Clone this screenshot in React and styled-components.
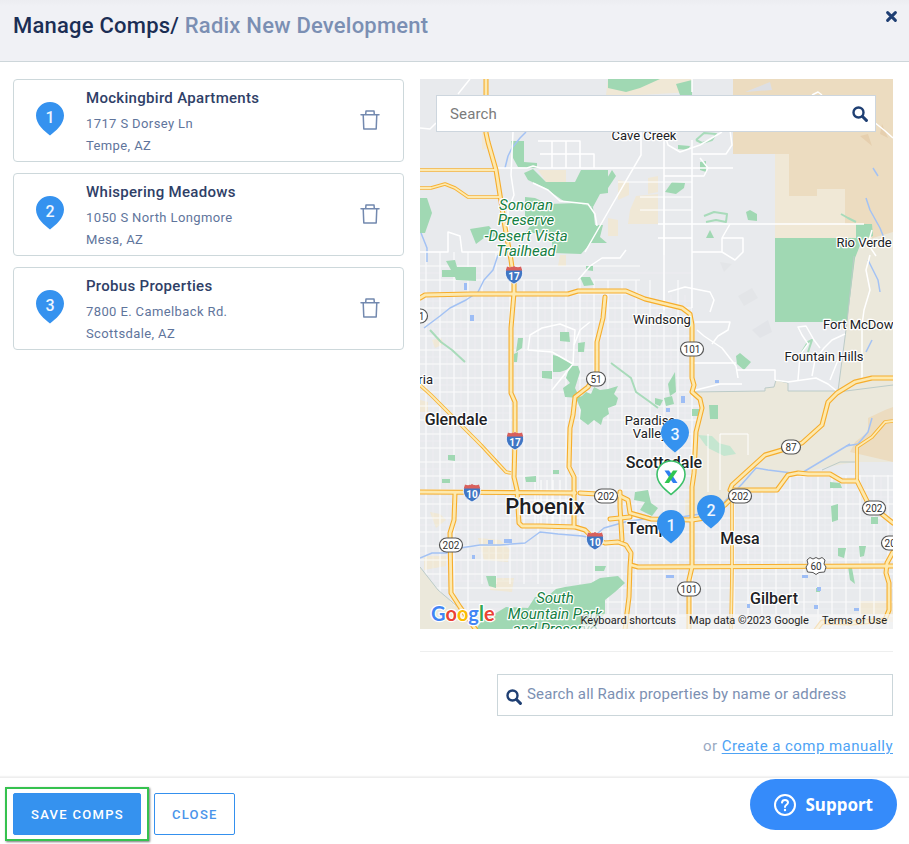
import React from "react";
import styled, { createGlobalStyle } from "styled-components";

const GlobalStyle = createGlobalStyle`
  *, *::before, *::after { box-sizing: border-box; }
  body {
    margin: 0;
    background: #fff;
    color: #14284f;
    font-family: Roboto, "Liberation Sans", sans-serif;
  }
  button, input { font: inherit; }
`;

const Page = styled.div`
  display: flex;
  flex-direction: column;
  min-height: 100vh;
`;

const Header = styled.header`
  display: flex;
  align-items: flex-start;
  justify-content: space-between;
  padding: 10px 11px 19px 13px;
  background: linear-gradient(#ecedf1, #f0f1f5 6px);
  border-bottom: 1px solid #cdd6da;
`;

const Title = styled.h1`
  margin: 0;
  font-size: 22px;
  line-height: 32px;
  font-weight: 500;
  letter-spacing: 0.01em;
  color: #1b2e54;
`;

const Muted = styled.span`
  color: #7b8fb3;
`;

const IconButton = styled.button`
  display: flex;
  padding: 0;
  border: 0;
  background: none;
  color: ${(p) => p.$color};
  cursor: pointer;
`;

const Body = styled.main`
  display: grid;
  grid-template-columns: minmax(0, 391fr) minmax(0, 473fr);
  gap: 16px;
  padding: 17px 16px 21px 13px;
`;

const CompList = styled.ul`
  display: flex;
  flex-direction: column;
  gap: 11px;
  margin: 0;
  padding: 0;
  list-style: none;
`;

const CompCard = styled.li`
  display: flex;
  align-items: center;
  gap: 22px;
  padding: 0 23px 3px 22px;
  border: 1px solid #cdd8db;
  border-radius: 4px;
`;

const CompText = styled.div`
  flex: 1;
  min-width: 0;
  padding: 6px 0 1px;
`;

const CompName = styled.h2`
  margin: 0 0 3px;
  font-size: 15px;
  line-height: 24px;
  font-weight: 500;
  letter-spacing: 0.02em;
  color: #2f4067;
`;

const CompLine = styled.p`
  margin: 0;
  font-size: 13px;
  line-height: 22px;
  letter-spacing: 0.03em;
  color: #5f759c;
`;

const MapColumn = styled.section`
  display: flex;
  flex-direction: column;
`;

const MapFrame = styled.div`
  position: relative;
  height: 550px;
  overflow: hidden;
  background: #e8eaed;
`;

const MapDrawing = styled.svg`
  display: block;
  width: 100%;
  height: 100%;
`;

const MapSearch = styled.label`
  position: absolute;
  top: 16px;
  left: 16px;
  right: 17px;
  display: flex;
  align-items: center;
  height: 37px;
  padding: 0 7px 0 13px;
  border: 1px solid #cdd6de;
  background: #fff;
  color: #1f3f73;
`;

const TextInput = styled.input`
  flex: 1;
  min-width: 0;
  padding: 0;
  border: 0;
  outline: 0;
  background: transparent;
  color: #14284f;
  font-size: 15px;
  line-height: 20px;
  letter-spacing: 0.01em;
  &::placeholder {
    color: ${(p) => p.$hint};
    opacity: 1;
  }
`;

const Attribution = styled.div`
  position: absolute;
  right: 0;
  bottom: 0;
  display: flex;
  gap: 13px;
  padding: 0 6px 2px 0;
  background: rgba(245, 245, 245, 0.7);
  font-size: 11px;
  line-height: 13px;
  color: #222;
  a, button {
    padding: 0;
    border: 0;
    background: none;
    color: inherit;
    text-decoration: none;
    white-space: nowrap;
  }
`;

const Divider = styled.hr`
  width: 100%;
  height: 1px;
  margin: 22px 0;
  border: 0;
  background: #eeefef;
`;

const PropertySearch = styled.label`
  display: flex;
  align-items: flex-start;
  align-self: flex-end;
  gap: 5px;
  width: 396px;
  max-width: 100%;
  height: 42px;
  padding: 9px 8px;
  border: 1px solid #cbd6da;
  color: #1f3f73;
  svg { margin-top: 5px; }
`;

const ManualLine = styled.p`
  margin: 20px 0 0;
  text-align: right;
  font-size: 15px;
  line-height: 20px;
  letter-spacing: 0.03em;
  color: #9aa9c2;
  a {
    color: #4ea3f5;
    text-underline-offset: 2px;
  }
`;

const Footer = styled.footer`
  display: flex;
  align-items: flex-start;
  flex: 1;
  gap: 5px;
  padding: 9px 5px 0;
  border-top: 1px solid #eee;
  box-shadow: 0 -1px 1px #f4f4f4;
`;

const Highlight = styled.div`
  padding: 4px 6px;
  border: 2px solid #35c24f;
  box-shadow: 1px 1px 2px #777;
`;

const ActionButton = styled.button`
  display: block;
  height: 42px;
  padding: 0 16px 0 17px;
  border: 1px solid #3490ee;
  border-radius: 2px;
  background: ${(p) => (p.$primary ? "#3592ef" : "#fff")};
  color: ${(p) => (p.$primary ? "#fff" : "#4a94ea")};
  font-size: 13px;
  font-weight: 500;
  letter-spacing: 0.1em;
  text-transform: uppercase;
  cursor: pointer;
`;

const CloseSlot = styled.div`
  padding-top: 6px;
`;

const SupportButton = styled.button`
  position: fixed;
  right: 12px;
  bottom: 14px;
  display: flex;
  align-items: center;
  gap: 9px;
  height: 51px;
  padding: 0 24px;
  border: 0;
  border-radius: 26px;
  background: #358bfa;
  color: #fff;
  font-family: "Noto Sans", "Open Sans", sans-serif;
  font-size: 17px;
  font-weight: 700;
  cursor: pointer;
`;

/* ---------- icons ---------- */

const SearchIcon = () => (
  <svg width="16" height="16" viewBox="0 0 16 16" fill="none" stroke="currentColor" aria-hidden="true">
    <circle cx="6.5" cy="6.5" r="5" strokeWidth="2.4" />
    <path d="M10.5 10.5L14.4 14.4" strokeWidth="3" strokeLinecap="round" />
  </svg>
);

const CloseIcon = () => (
  <svg width="13" height="13" viewBox="0 0 13 13" fill="none" stroke="currentColor" aria-hidden="true">
    <path d="M2.6 2.6l7.8 7.8M10.4 2.6l-7.8 7.8" strokeWidth="3" strokeLinecap="round" />
  </svg>
);

const TrashIcon = () => (
  <svg width="20" height="22" viewBox="0 -2 20 22" fill="none" stroke="currentColor" strokeWidth="1.5" aria-hidden="true">
    <path d="M1 4.7h18M5.7 4.5L6 .9h8l.3 3.6M3.2 4.8l.6 14.2h12.4l.6-14.2" strokeLinejoin="round" strokeLinecap="round" />
  </svg>
);

const HelpIcon = () => (
  <svg width="22" height="22" viewBox="0 0 22 22" fill="none" stroke="currentColor" strokeWidth="2" aria-hidden="true">
    <circle cx="11" cy="11" r="10" />
    <path d="M8 8.6C8.2 6.8 9.4 6 11 6c1.700 0 3 1 3 2.500 0 2.300-3 2.300-3 4.600" strokeLinecap="round" />
    <circle cx="11" cy="16" r=".6" strokeWidth="1.200" fill="currentColor" />
  </svg>
);

const PIN = "M14 0C6.200 0 0 6 0 13.400 0 22.500 8.600 29 14 33.500 19.400 29 28 22.500 28 13.400 28 6 21.800 0 14 0z";

const PinShape = ({ label }) => (
  <>
    <path d={PIN} fill="#3592ef" />
    <text x="14" y="21" textAnchor="middle" fontSize="16" fontWeight="500" fill="#eef6ff">
      {label}
    </text>
  </>
);

const ListPin = ({ label }) => (
  <svg width="28" height="34" viewBox="0 0 28 34">
    <PinShape label={label} />
  </svg>
);

/* ---------- map data (canvas starts at 420, 79) ---------- */

const LAND = [
  ["#f0e8d6", "775,154 789,154 789,196 817,196 817,189 845,189 845,224 872,224 872,240 775,240"],
  ["#ecdcc0", "733,79 893,79 893,236 872,240 872,224 845,224 845,189 817,189 817,196 789,196 789,154 733,154"],
  ["#f0e8d6", "608,79 676,79 692,79 692,92 640,95 606,95"],
  ["#ebe8db", "866,240 893,232 893,386 838,392 847,322 854,256"],
  ["#ebe8db", "692,392 765,391 765,388 774,387 776,380 788,383 788,391 838,391 893,385 893,462 855,462 822,468 798,474 788,475 777,489 732,491 734,500 705,520 697,522 685,522 685,500 692,499 694,440 702,408"],
  ["#ecdcc0", "893,407 885,410 868,418 868,432 855,442 850,452 893,462"],
  ["#ebe8db", "420,567 438,590 458,607 475,629 420,629"],
  ["#f0e8d6", "538,170 566,170 566,182 546,182"],
  ["#f0e8d6", "482,128 489,128 489,148 482,150"],
  ["#f0e8d6", "618,180 629,182 629,195 618,200"],
  ["#f0e8d6", "636,196 658,194 658,224 628,224 630,210"],
  ["#f0e8d6", "608,218 618,220 618,236 608,236"],
  ["#f0e8d6", "648,178 658,176 658,192 648,194"],
  ["#f0e8d6", "560,255 566,255 566,266 558,266"],
  ["#f0e8d6", "432,340 441,338 444,344 435,348"],
  ["#f0e8d6", "420,400 428,402 428,412 420,412"],
  ["#f0e8d6", "430,512 440,514 446,520 436,528"],
  ["#f0e8d6", "478,538 500,540 510,550 508,562 484,560"],
  ["#f0e8d6", "490,578 514,578 512,592 490,590"],
  ["#f0e8d6", "424,556 446,556 446,566 424,570"],
  ["#f0e8d6", "860,601 893,601 893,622 860,622"],
  ["#dddfe4", "745,92 770,82 772,90"],
  ["#e3e5e8", "738,296 752,288 758,298 744,306"],
  ["#e2e4e8", "752,330 768,320 772,332 760,338"],
  ["#e3e5e8", "720,262 732,264 724,272"],
  ["#e6cfae", "860,136 868,134 872,146"],
  ["#e6cfae", "882,124 888,138 880,134"],
];

const GREENS = [
  "608,79 660,79 640,88 626,92 608,88",
  "676,84 692,80 692,95 680,95",
  "511,141 524,141 524,162 537,163 537,168 518,167 513,158",
  "533,169 546,182 575,182 581,170 608,170 608,193 600,194 593,207 578,203 565,202 545,188 528,180 524,173",
  "525,197 535,198 548,204 578,203 593,207 595,225 603,225 600,237 607,243 591,243 581,254 553,253 551,233 525,233 532,224 525,217",
  "612,170 616,176 608,188 606,180",
  "420,198 427,198 432,213 425,233 420,233",
  "470,229 489,226 498,236 484,238 476,244",
  "446,261 455,260 457,267 476,267 476,281 456,280 455,277 442,277 442,270 451,270",
  "678,145 690,146 688,150 678,149",
  "665,192 672,182 685,183 684,188 676,194",
  "746,212 750,210 757,214 757,221 748,220",
  "700,162 706,161 706,172 700,170",
  "710,230 714,238 706,238",
  "775,238 863,238 855,258 847,322 775,322",
  "856,224 872,224 873,236 862,240 856,238",
  "518,338 523,338 522,348 516,352",
  "514,354 518,352 517,362 514,362",
  "560,332 569,332 570,342 560,341",
  "578,343 585,342 584,352 578,352",
  "580,277 590,277 594,285 584,286",
  "586,266 593,266 593,271 586,270",
  "542,371 552,371 552,379 542,378",
  "553,355 561,357 573,365 566,370 560,372 553,372",
  "570,366 578,366 580,372 575,388 580,398 565,397 563,388 570,383 566,378",
  "576,398 582,396 586,392 591,394 594,387 600,390 608,389 618,386 614,394 618,398 616,405 608,408 609,414 603,418 601,425 594,420 588,425 580,419 581,410",
  "736,356 740,353 746,358 751,362 744,370 737,364",
  "709,405 718,405 718,419 710,419",
  "692,409 699,409 699,416 692,416",
  "476,629 481,622 506,607 528,608 535,597 548,596 556,589 565,587 591,583 600,578 618,576 625,583 615,592 605,600 605,613 595,629",
  "635,492 648,490 651,503 658,508 652,516 640,510 645,502 634,500",
  "668,384 675,372 676,392 670,396",
  "664,398 672,396 674,404 666,406",
  "655,398 663,400 660,406 655,404",
  "525,477 536,476 536,482 526,482",
  "553,470 559,470 559,474 553,474",
  "448,455 455,455 455,461 448,460",
  "442,479 450,479 450,483 442,483",
  "486,576 496,576 496,588 489,586",
  "595,566 606,566 604,571 595,571",
  "830,482 840,483 842,488 830,488",
  "831,506 838,504 838,520 832,522",
  "871,517 878,517 878,524 871,524",
  "838,548 846,548 844,558 838,556",
  "848,566 852,568 855,584 850,580",
  "816,588 820,588 820,592 816,592",
  "859,546 866,546 864,556 860,557",
];

const PALE_GREENS = [
  "698,435 712,436 722,446 706,446",
  "706,440 730,446 736,454 724,456 708,448",
];

const GREEN_LINES = [
  "430,330 441,342 452,350 465,362",
  "611,363 631,378 636,392 650,402 658,408",
  "696,140 704,133 716,134 712,140 702,143 696,140",
  "704,216 714,212 727,214 726,222 716,220 706,222",
  "802,352 808,342 812,340 808,352",
  "841,214 848,218 856,222",
];

const MOTORWAYS = [
  "486,79 486,133 488,142 496,170 500,195 505,227 511,260 514,282 514,293 511,328 511,393 515,402 515,440 514,477 517,490 519,523 522,526 541,526 575,527 585,530 593,538 605,543 618,542 626,545 631,553 630,567 629,597 627,613 625,630",
  "420,298 425,295 471,294 568,294 578,291 626,291 645,299 682,308 690,314 692,325 692,378 694,385 692,392 700,399 702,408 696,432 694,473 692,487 692,567 689,580 689,630",
  "605,297 603,318 597,342 597,372 588,387 575,397 573,415 570,428 569,467 574,477 574,525",
  "420,492 575,493",
  "580,493 597,494 618,495 628,500 630,513 651,519 692,520 705,518 725,505 733,497",
  "730,490 732,485 765,455 782,450 802,443 822,425 828,402 837,393 855,382 872,378 893,378",
  "733,490 777,490 788,475 798,473 808,474 830,474 842,481 857,481 868,503 893,523",
  "631,565 638,567 893,566",
  "620,492 620,507 622,540",
  "610,519 630,517",
  "455,493 454,520 450,533 451,593 460,607 476,630",
  "893,552 887,563 886,573 889,583 889,610 885,620 852,623 822,622 816,630",
];

const HIGHWAYS = [
  "420,170 496,170",
  "420,188 431,188 445,184 455,188 468,197 499,197",
  "420,385 431,395 481,445 506,472 511,473",
  "732,500 732,570 731,629",
  "857,481 857,447 872,437 885,422 893,421",
];

const STREETS = [
  "496,168 527,168 533,166 540,168 733,168",
  "658,224 864,224",
  "533,183 548,190 560,201 588,204 595,214 597,226",
  "692,79 692,92",
  "458,94 470,79",
  "420,128 430,129 436,123",
  "585,252 612,205 641,155 641,132",
  "513,132 511,175 514,195 508,210 508,235 512,255",
  "664,310 664,132 668,145 680,152 700,145 722,132",
  "730,130 732,145 726,154 692,154",
  "692,140 692,308",
  "664,176 704,176 708,168 700,158",
  "658,238 692,238 M692,252 722,252",
  "730,224 722,238 722,252 735,260 743,252 743,238 722,238",
  "540,154 594,154 594,168 M538,141 580,141 580,168 M552,141 552,168 M566,141 566,168",
  "862,118 874,122 884,130 893,138",
  "812,95 818,92 822,95",
  "872,230 868,244 876,256",
  "870,255 866,270 870,290 864,310 862,325 862,380",
  "697,330 704,336 722,348 736,366 738,378 M775,380 788,382 816,378 828,384 838,392",
  "668,292 685,287 710,292 714,300 710,312 M695,322 730,322 728,330 718,336 712,344",
  "692,363 736,363 M736,370 775,370 775,380 M692,391 720,384 742,384",
  "798,380 800,355 808,344 802,335 798,327 806,326 814,340 820,348 M812,376 815,360 824,348 832,340 845,334 M830,380 840,355",
  "420,252 448,252 448,232 460,236 462,252 500,252",
  "578,280 590,266 602,258 620,258 626,250",
  "528,350 530,335 542,328 560,324 575,330 574,345 M528,350 552,352 573,364 552,390",
  "573,364 574,345 580,330 590,322",
];

const WATER = [
  "526,132 520,138 512,148 508,156 505,168",
  "421,233 427,248 427,262",
  "498,255 493,270 484,280 478,292 466,300 450,308 440,316 424,328",
  "420,558 432,553 446,553 460,548 480,545 500,545 525,543 540,532 558,534 582,536 592,538 604,528 625,522 650,518 675,518",
  "675,518 700,514 715,512 726,500 742,484 756,468 768,470 800,474 830,456 850,444",
  "872,418 868,432 858,444 846,446",
  "868,260 878,280 880,292",
  "866,198 870,210 880,228 884,238",
  "866,352 872,340",
  "873,168 878,176",
];

const TINY_LAKES = [
  [470, 315, 4, 6], [488, 540, 5, 4], [504, 539, 8, 4], [472, 555, 3, 4],
  [464, 283, 3, 7], [666, 408, 4, 4], [681, 396, 4, 7], [715, 380, 4, 3],
  [666, 575, 8, 3], [802, 575, 6, 3], [817, 587, 4, 4], [747, 604, 3, 4],
  [814, 605, 4, 4], [854, 608, 5, 3],
];

const range = (from, to, step) => {
  const out = [];
  for (let v = from; v <= to; v += step) out.push(v);
  return out;
};

const GRID_X = range(426, 893, 14);
const GRID_Y = range(266, 629, 14);
const MINOR_X = range(433, 893, 14);
const MINOR_Y = range(273, 629, 28);

const LABELS = [
  ["Cave Creek", 644, 140, 13],
  ["Rio Verde", 864, 247, 13],
  ["Windsong", 662, 324, 13],
  ["Fort McDowell", 823, 329, 13, "start"],
  ["Fountain Hills", 824, 361, 13],
  ["Peoria", 433, 384, 13, "end"],
  ["Paradise", 650, 425, 13],
  ["Valley", 650, 438, 13],
  ["Glendale", 456, 425, 16],
  ["Scottsdale", 664, 468, 16],
  ["Phoenix", 545, 514, 22],
  ["Tempe", 627, 534, 16, "start"],
  ["Mesa", 740, 544, 16],
  ["Gilbert", 774, 604, 16],
];

const PARK_LABELS = [
  ["Sonoran", 526, 210],
  ["Preserve", 526, 225],
  ["-Desert Vista", 526, 241],
  ["Trailhead", 526, 256],
  ["South", 555, 603],
  ["Mountain Park", 555, 619],
  ["and Preserve", 555, 634],
];

const ROUTES = [
  ["101", 416, 316], ["51", 596, 379], ["101", 692, 349], ["87", 791, 447],
  ["202", 606, 496], ["202", 740, 496], ["202", 451, 545], ["202", 874, 508],
  ["202", 893, 543], ["101", 689, 589],
];

const INTERSTATES = [["17", 514, 275], ["17", 515, 441], ["10", 472, 493], ["10", 595, 541]];

const toPath = (points) =>
  points.split("M").map((part) => "M" + part.trim().replace(/ /g, "L")).join("");

const Lines = ({ list, ...rest }) => (
  <g fill="none" strokeLinejoin="round" {...rest}>
    {list.map((points) => <path key={points} d={toPath(points)} />)}
  </g>
);

const RouteBadge = ({ label, x, y }) => {
  const w = label.length > 2 ? 23 : 19;
  return (
    <g transform={`translate(${x} ${y})`}>
      <rect x={-w / 2} y="-7" width={w} height="14" rx="7" fill="#fff" stroke="#555" strokeWidth="1.200" />
      <text y="4" textAnchor="middle" fontSize="10" fill="#333">{label}</text>
    </g>
  );
};

const InterstateBadge = ({ label, x, y }) => (
  <g transform={`translate(${x} ${y})`}>
    <path d="M-7-8c2 1 5 1 7-.5C2-7 5-7 7-8l1.500 4c.8 6-2.500 10-8.500 13-6-3-9.300-7-8.500-13z" fill="#4076c4" stroke="#fff" strokeWidth=".8" />
    <path d="M-7-8.500c2 1 5 1 7-.5 2 1.500 5 1.500 7 .5l1.200 4h-16.400z" fill="#d9605c" />
    <text y="5" textAnchor="middle" fontSize="10" fontWeight="700" fill="#fff">{label}</text>
  </g>
);

const ValleyMap = () => (
  <MapDrawing viewBox="420 79 473 550" preserveAspectRatio="xMidYMid slice" role="img" aria-label="Map of the Phoenix area">
    <defs>
      <clipPath id="city">
        <path d="M420 200H500V255H692V392L702 408 694 440V522H705L740 490H777L790 475H893V629H478L438 590 420 567z" />
      </clipPath>
    </defs>
    <rect x="420" y="79" width="473" height="550" fill="#e8eaed" />
    {LAND.map(([fill, points]) => <polygon key={points} fill={fill} points={points} />)}
    <g clipPath="url(#city)" stroke="#fff">
      <g strokeWidth="1" opacity=".22">
        {MINOR_X.map((x) => <path key={x} d={`M${x} 295V580`} />)}
        {MINOR_Y.map((y) => <path key={y} d={`M420 ${y}H893`} />)}
      </g>
      <g strokeWidth="1.200" opacity=".8">
        {GRID_X.map((x) => <path key={x} d={`M${x} ${x < 500 ? 252 : 280}V${x > 480 && x < 600 ? 584 : 629}`} />)}
        {GRID_Y.map((y) => <path key={y} d={`M420 ${y}H${y < 300 ? 640 : 893}`} />)}
      </g>
      <path d="M535 480V526M541 480V526M547 480V526M553 480V526M560 480V526M525 500H574M525 506H574M525 514H574" strokeWidth="1" />
    </g>
    <g fill="#a0d8b3">
      {GREENS.map((points) => <polygon key={points} points={points} />)}
    </g>
    <g fill="#c5e6d0">
      {PALE_GREENS.map((points) => <polygon key={points} points={points} />)}
    </g>
    <Lines list={GREEN_LINES} stroke="#a8dbba" strokeWidth="2" />
    <Lines
      list={["854,256 847,322 838,391 788,391 788,383 776,380 774,387 765,388 765,391 692,392", "838,392 893,385", "420,567 438,590 458,607", "855,462 840,462 822,470"]}
      stroke="#bccbc8"
      strokeWidth="1"
    />
    <Lines list={WATER} stroke="#a3c2f4" strokeWidth="1.500" />
    <g fill="#9dbdf5">
      {TINY_LAKES.map(([x, y, w, h]) => <rect key={`${x}-${y}`} x={x} y={y} width={w} height={h} />)}
    </g>
    <g stroke="#fff" strokeWidth="1">
      {[182, 197, 210].map((y) => <path key={y} d={`M${y === 182 ? 618 : 640} ${y}H692`} />)}
      <path d="M708 492V434M720 434H748V455M720 434V490M664 196V255" fill="none" />
    </g>
    <Lines list={STREETS} stroke="#fff" strokeWidth="1.500" />
    <Lines list={HIGHWAYS} stroke="#f7b336" strokeWidth="3.600" />
    <Lines list={MOTORWAYS} stroke="#f6ad2c" strokeWidth="5" strokeLinecap="round" />
    <Lines list={HIGHWAYS} stroke="#fdeab2" strokeWidth="1.800" />
    <Lines list={MOTORWAYS} stroke="#fde9ae" strokeWidth="2.800" strokeLinecap="round" />
    {INTERSTATES.map(([label, x, y]) => <InterstateBadge key={`${x}-${y}`} label={label} x={x} y={y} />)}
    {ROUTES.map(([label, x, y]) => <RouteBadge key={`${x}-${y}`} label={label} x={x} y={y} />)}
    <g transform="translate(816 566)">
      <path d="M-9-6l3-2.500 3 1.500 3-1.500L3-7l3-1.500L9-6 8-2l2 3-1.500 5L3 6.500 0 8.500-3 6.500-8.500 6-10 1l2-3z" fill="#fff" stroke="#555" />
      <text y="4" textAnchor="middle" fontSize="10" fill="#333">60</text>
    </g>
    <g textAnchor="middle" stroke="#fff" strokeWidth="2.500" strokeLinejoin="round" paintOrder="stroke">
      {PARK_LABELS.map(([label, x, y]) => (
        <text key={label} x={x} y={y} fontSize="15" fontStyle="italic" fill="#158043">{label}</text>
      ))}
      {LABELS.map(([label, x, y, size, anchor]) => (
        <text key={label} x={x} y={y} fontSize={size} fontWeight={size > 13 ? 500 : 400} textAnchor={anchor} fill="#202124">{label}</text>
      ))}
      <text x="431" y="621" textAnchor="start" fontFamily="Lato, sans-serif" fontSize="20" fontWeight="700">
        <tspan fill="#4285f4">G</tspan>
        <tspan fill="#ea4335">o</tspan>
        <tspan fill="#fbbc05">o</tspan>
        <tspan fill="#4285f4">g</tspan>
        <tspan fill="#34a853">l</tspan>
        <tspan fill="#ea4335">e</tspan>
      </text>
    </g>
    <g transform="translate(661 419)"><PinShape label="3" /></g>
    <g transform="translate(657 461)">
      <path d={PIN} fill="#fff" stroke="#3cc069" strokeWidth="1.600" />
      <path d="M7.500 9.500h4.500l8.500 12.500h-4.500z" fill="#2f7ff0" />
      <path d="M20.500 9.500h-4.500l-8.500 12.500h4.500z" fill="#2ec651" />
    </g>
    <g transform="translate(697 495)"><PinShape label="2" /></g>
    <g transform="translate(657 510)"><PinShape label="1" /></g>
  </MapDrawing>
);

const COMPS = [
  { name: "Mockingbird Apartments", street: "1717 S Dorsey Ln", city: "Tempe, AZ" },
  { name: "Whispering Meadows", street: "1050 S North Longmore", city: "Mesa, AZ" },
  { name: "Probus Properties", street: "7800 E. Camelback Rd.", city: "Scottsdale, AZ" },
];

export default function App() {
  return (
    <Page>
      <GlobalStyle />
      <Header>
        <Title>
          Manage Comps/ <Muted>Radix New Development</Muted>
        </Title>
        <IconButton $color="#1f3f73" aria-label="Close dialog">
          <CloseIcon />
        </IconButton>
      </Header>
      <Body>
        <CompList>
          {COMPS.map((comp, i) => (
            <CompCard key={comp.name}>
              <ListPin label={i + 1} />
              <CompText>
                <CompName>{comp.name}</CompName>
                <CompLine>{comp.street}</CompLine>
                <CompLine>{comp.city}</CompLine>
              </CompText>
              <IconButton $color="#7389af" aria-label={`Remove ${comp.name}`}>
                <TrashIcon />
              </IconButton>
            </CompCard>
          ))}
        </CompList>
        <MapColumn>
          <MapFrame>
            <ValleyMap />
            <MapSearch>
              <TextInput type="text" placeholder="Search" aria-label="Search the map" $hint="#7b7b7b" />
              <SearchIcon />
            </MapSearch>
            <Attribution>
              <button type="button">Keyboard shortcuts</button>
              <span>Map data ©2023 Google</span>
              <a href="#terms">Terms of Use</a>
            </Attribution>
          </MapFrame>
          <Divider />
          <PropertySearch>
            <SearchIcon />
            <TextInput
              type="text"
              placeholder="Search all Radix properties by name or address"
              aria-label="Search all Radix properties"
              $hint="#7c90b2"
            />
          </PropertySearch>
          <ManualLine>
            or <a href="#create">Create a comp manually</a>
          </ManualLine>
        </MapColumn>
      </Body>
      <Footer>
        <Highlight>
          <ActionButton type="button" $primary>Save Comps</ActionButton>
        </Highlight>
        <CloseSlot>
          <ActionButton type="button">Close</ActionButton>
        </CloseSlot>
      </Footer>
      <SupportButton type="button">
        <HelpIcon />
        Support
      </SupportButton>
    </Page>
  );
}
